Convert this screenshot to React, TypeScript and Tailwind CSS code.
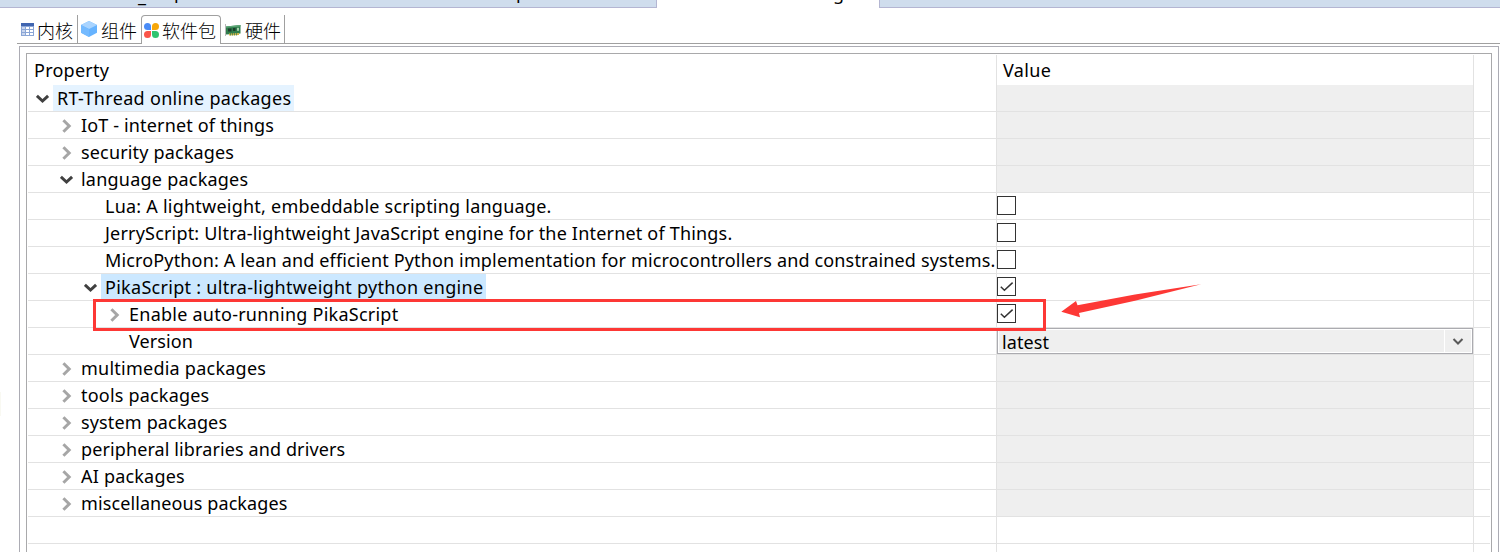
import React from "react";

type Cell = "disabled" | "off" | "on" | "select" | "empty";

interface Row {
  label: string;
  indent: string;
  spacing?: string;
  arrow?: "open" | "closed";
  highlight?: string;
  cell: Cell;
}

const L0 = "pl-[8px]";
const L1 = "pl-[32px]";
const L2 = "pl-[56px]";
const L3 = "pl-[80px]";

const rows: Row[] = [
  { label: "RT-Thread online packages", indent: L0, spacing: "tracking-[0.32px]", arrow: "open", highlight: "bg-[#e5f3ff]", cell: "disabled" },
  { label: "IoT - internet of things", indent: L1, spacing: "tracking-[0.15px]", arrow: "closed", cell: "disabled" },
  { label: "security packages", indent: L1, spacing: "tracking-[0.16px]", arrow: "closed", cell: "disabled" },
  { label: "language packages", indent: L1, spacing: "tracking-[0.23px]", arrow: "open", cell: "disabled" },
  { label: "Lua: A lightweight, embeddable scripting language.", indent: L2, spacing: "tracking-[0.23px]", cell: "off" },
  { label: "JerryScript: Ultra-lightweight JavaScript engine for the Internet of Things.", indent: L2, spacing: "tracking-[0.19px]", cell: "off" },
  { label: "MicroPython: A lean and efficient Python implementation for microcontrollers and constrained systems.", indent: L2, spacing: "tracking-[0.15px]", cell: "off" },
  { label: "PikaScript : ultra-lightweight python engine", indent: L2, spacing: "tracking-[0.29px]", arrow: "open", highlight: "bg-[#cce8ff]", cell: "on" },
  { label: "Enable auto-running PikaScript", indent: L3, spacing: "tracking-[0.25px]", arrow: "closed", cell: "on" },
  { label: "Version", indent: L3, spacing: "tracking-[0.1px]", cell: "select" },
  { label: "multimedia packages", indent: L1, spacing: "tracking-[0.24px]", arrow: "closed", cell: "disabled" },
  { label: "tools packages", indent: L1, spacing: "tracking-[0.2px]", arrow: "closed", cell: "disabled" },
  { label: "system packages", indent: L1, spacing: "tracking-[0.15px]", arrow: "closed", cell: "disabled" },
  { label: "peripheral libraries and drivers", indent: L1, spacing: "tracking-[0.11px]", arrow: "closed", cell: "disabled" },
  { label: "AI packages", indent: L1, spacing: "tracking-[0.2px]", arrow: "closed", cell: "disabled" },
  { label: "miscellaneous packages", indent: L1, spacing: "tracking-[0.1px]", arrow: "closed", cell: "disabled" },
  { label: "", indent: L0, spacing: "tracking-[0px]", cell: "empty" },
  { label: "", indent: L0, spacing: "tracking-[0px]", cell: "empty" },
];

function Arrow({ kind }: { kind?: "open" | "closed" }) {
  return (
    <svg width="14" height="26" viewBox="0 0 14 26" className="shrink-0" fill="none" strokeWidth="3">
      {kind === "open" && <path d="M0.9 10.8 L6.5 16 L12.1 10.8" stroke="#404040" />}
      {kind === "closed" && <path d="M3.4 8.2 L9.2 14 L3.4 19.8" stroke="#a6a6a6" />}
    </svg>
  );
}

function Checkbox({ checked }: { checked: boolean }) {
  return (
    <span className="mt-[3px] block h-[19px] w-[19px] border border-[#333] bg-white">
      {checked && (
        <svg width="17" height="17" viewBox="0 0 17 17" fill="none">
          <path d="M2.8 8.8 L6.4 12.2 L14.6 4.6" stroke="#333" strokeWidth="1.5" />
        </svg>
      )}
    </span>
  );
}

function ValueCell({ cell }: { cell: Cell }) {
  if (cell === "select") {
    return (
      <div className="flex h-[26px] w-full border border-[#ababb0] bg-white p-px">
        <span className="h-[22px] grow bg-[#efefef] pl-[3px] leading-[25px] tracking-[0.1px]">latest</span>
        <span className="ml-px flex h-[22px] w-[26px] justify-center bg-[#efefef]">
          <svg width="26" height="22" viewBox="0 0 26 22" fill="none">
            <path d="M8.5 9 L13 13.5 L17.5 9" stroke="#5a5a5a" strokeWidth="2" />
          </svg>
        </span>
      </div>
    );
  }
  if (cell === "off" || cell === "on") return <Checkbox checked={cell === "on"} />;
  return null;
}

function TreeRow({ row }: { row: Row }) {
  return (
    <div className="flex h-[27px] shrink-0 border-b border-[#e2e2e2]">
      <div className={"flex w-[969px] shrink-0 border-r border-[#e2e2e2] " + row.indent}>
        <Arrow kind={row.arrow} />
        <span
          className={
            "ml-[3px] h-[26px] whitespace-nowrap pl-[4px] pr-[3px] leading-[26px] " +
            (row.highlight ?? "") + " " + (row.spacing ?? "")
          }
        >
          {row.label}
        </span>
      </div>
      <div className={"w-[477px] shrink-0 border-r border-[#e2e2e2] " + (row.cell === "disabled" ? "bg-[#efefef]" : "")}>
        <ValueCell cell={row.cell} />
      </div>
    </div>
  );
}

function TableIcon() {
  return (
    <svg width="13" height="13" viewBox="0 0 13 13" shapeRendering="crispEdges">
      <rect width="13" height="13" fill="#8ba6d6" />
      <rect width="13" height="3" fill="#4065b0" />
      <rect x="1" y="4" width="3" height="2" fill="#c9d6ee" />
      <rect x="1" y="7" width="3" height="2" fill="#c9d6ee" />
      <rect x="1" y="10" width="3" height="2" fill="#c9d6ee" />
      <rect x="5" y="4" width="3" height="2" fill="#fff" />
      <rect x="5" y="7" width="3" height="2" fill="#fff" />
      <rect x="5" y="10" width="3" height="2" fill="#fff" />
      <rect x="9" y="4" width="3" height="2" fill="#fff" />
      <rect x="9" y="7" width="3" height="2" fill="#fff" />
      <rect x="9" y="10" width="3" height="2" fill="#fff" />
    </svg>
  );
}

function CubeIcon() {
  return (
    <svg width="16" height="16" viewBox="0 0 16 16">
      <path d="M8 0 L16 4 V11.8 L8 16 L0 11.8 V4 Z" fill="#66b3ff" />
      <path d="M8 0 L16 4 L8 8 L0 4 Z" fill="#a9d4ff" />
      <path d="M0 4 L8 8 V16 L0 11.8 Z" fill="#74baff" />
    </svg>
  );
}

function PackagesIcon() {
  return (
    <svg width="15" height="15" viewBox="0 0 15 15">
      <path d="M3.5 0 A3.5 3.5 0 0 1 7 3.5 V7 H3.5 A3.5 3.5 0 0 1 3.5 0" fill="#4a8cf7" />
      <path d="M11.5 0 A3.5 3.5 0 0 0 8 3.5 V7 H11.5 A3.5 3.5 0 0 0 11.5 0" fill="#f7a70a" />
      <path d="M3.5 15 A3.5 3.5 0 0 0 7 11.5 V8 H3.5 A3.5 3.5 0 0 0 3.5 15" fill="#fa5549" />
      <path d="M11.5 15 A3.5 3.5 0 0 1 8 11.5 V8 H11.5 A3.5 3.5 0 0 1 11.5 15" fill="#2fc46f" />
    </svg>
  );
}

function BoardIcon() {
  return (
    <svg width="16" height="13" viewBox="0 0 16 13">
      <path d="M0.5 0 V12" stroke="#b8b8b8" />
      <path d="M1 2.5 L15.5 1 V9.5 L1 10.5 Z" fill="#2f7d4c" />
      <path d="M1 2.5 L15.5 1 V2.4 L1 3.8 Z" fill="#5ea878" />
      <rect x="3" y="4.5" width="3.5" height="3" fill="#1d3d2c" />
      <rect x="8" y="4" width="2.5" height="3" fill="#1d3d2c" />
      <rect x="12" y="3.8" width="2" height="3" fill="#a9cfae" />
      <path d="M4 9.6 L14 9 V11 L4 11.4 Z" fill="#d0b44a" />
      <path d="M5.5 9 V11.5 M7.5 9 V11.5 M9.5 9 V11.5 M11.5 9 V11.5" stroke="#2f7d4c" strokeWidth="0.7" />
    </svg>
  );
}

function TopStrip() {
  return (
    <div className="flex h-[8px] shrink-0 overflow-hidden text-[18px] leading-[24px]">
      <div className="flex w-[657px] shrink-0 overflow-hidden border-b border-r border-[#b4b6d2] bg-[#cfdded]">
        <span className="-mt-[17px] ml-[138px] w-[36px]">_</span>
        <span className="-mt-[20px] w-[342px]">p</span>
        <span className="-mt-[20px]">p</span>
      </div>
      <div className="flex w-[222px] shrink-0 overflow-hidden">
        <span className="-mt-[19px] ml-[176px]">g</span>
      </div>
      <div className="grow border-b border-l border-[#b4b6d2] bg-[#cfdded]" />
    </div>
  );
}

export default function App() {
  return (
    <div className="relative flex h-[552px] w-[1500px] flex-col overflow-hidden bg-white font-['Noto_Sans','Noto_Sans_CJK_SC',sans-serif] text-[18px] text-black">
      <TopStrip />

      <div className="mt-[7px] flex h-[29px] shrink-0 pl-[17px] font-['Noto_Sans_CJK_SC',sans-serif] font-light leading-[28px]">
        <div className="flex w-[61px] items-center border-b border-r border-[#a0a0a0] pl-[4px]">
          <TableIcon />
          <span className="ml-[3px] whitespace-nowrap pt-px">内核</span>
        </div>
        <div className="flex w-[63px] items-center border-b border-[#a0a0a0] pl-[3px]">
          <CubeIcon />
          <span className="ml-[4px] whitespace-nowrap pt-px">组件</span>
        </div>
        <div className="flex w-[80px] items-center rounded-t-[4px] border-x border-t border-[#a0a0a0] pl-[2px]">
          <PackagesIcon />
          <span className="ml-[3px] whitespace-nowrap">软件包</span>
        </div>
        <div className="flex w-[64px] items-center border-b border-r border-[#a0a0a0] pl-[4px]">
          <span className="pt-[2px]">
            <BoardIcon />
          </span>
          <span className="ml-[4px] whitespace-nowrap pt-px">硬件</span>
        </div>
        <div className="grow border-b border-[#a0a0a0]" />
      </div>

      <div className="ml-[19px] mt-[2px] flex w-[1480px] grow flex-col overflow-hidden border-x border-t border-[#acacb4] px-[6px] pt-[6px]">
        <div className="flex grow flex-col overflow-hidden border-x border-t border-[#a9a9ab] px-px pt-px">
          <div className="flex h-[30px] shrink-0 leading-[31px]">
            <div className="w-[969px] shrink-0 border-r border-[#e2e2e2] pl-[6px] tracking-[0.25px]">Property</div>
            <div className="w-[477px] shrink-0 border-r border-[#e2e2e2] pl-[6px] tracking-[0.35px]">Value</div>
          </div>
          {rows.map((row, i) => (
            <TreeRow key={i} row={row} />
          ))}
        </div>
      </div>

      <div className="absolute left-0 top-[392px] h-[24px] w-px bg-[#f9f9f2]" />
      <div className="absolute left-[93px] top-[299px] h-[32px] w-[953px] border-[3px] border-[#fd3835]" />
      <svg className="absolute left-[1055px] top-[275px]" width="150" height="50" viewBox="0 0 150 50">
        <path d="M6.3 36.7 L21 26 L22.5 30.2 L80 19.5 L146 9.2 L80 25.7 L24 38 L25 42.2 Z" fill="#fd3835" />
      </svg>
    </div>
  );
}
